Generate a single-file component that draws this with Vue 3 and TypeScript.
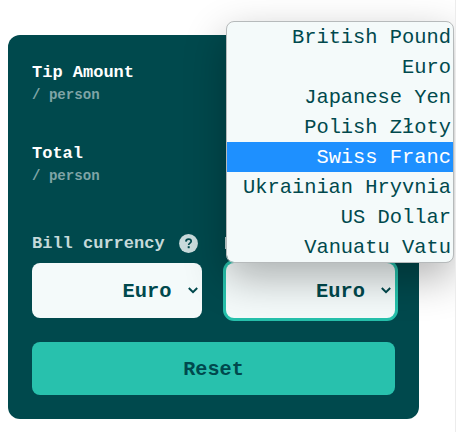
<script setup lang="ts">
import { ref } from 'vue'

interface Amount {
  title: string
  unit: string
}

const amounts: Amount[] = [
  { title: 'Tip Amount', unit: '/ person' },
  { title: 'Total', unit: '/ person' },
]

const currencies: string[] = [
  'British Pound',
  'Euro',
  'Japanese Yen',
  'Polish Złoty',
  'Swiss Franc',
  'Ukrainian Hryvnia',
  'US Dollar',
  'Vanuatu Vatu',
]

const billCurrency = ref('Euro')
const payCurrency = ref('Euro')
const highlighted = ref('Swiss Franc')
</script>

<template>
  <main class="page">
    <section class="card">
      <div class="amounts">
        <div v-for="a in amounts" :key="a.title" class="amount">
          <div class="title">{{ a.title }}</div>
          <div class="unit">{{ a.unit }}</div>
        </div>
      </div>

      <div class="fields">
        <div class="field">
          <div class="label">
            <span>Bill currency</span>
            <svg class="help" viewBox="0 0 19 19">
              <circle cx="9.5" cy="9.5" r="9.4" fill="#c9dbdc" />
              <path d="M6.9 7.6C7 5.9 8.1 5.1 9.6 5.1c1.6 0 2.6.9 2.6 2.2 0 1.9-2.5 1.8-2.5 3.7" fill="none" stroke="#00494d" stroke-width="1.7" />
              <rect x="8.7" y="12.2" width="2" height="2" fill="#00494d" />
            </svg>
          </div>
          <button class="select" type="button">
            <span>{{ billCurrency }}</span>
            <svg class="chevron" viewBox="0 0 10 7"><path d="M0.8 1 5 5.2 9.2 1" /></svg>
          </button>
        </div>
        <div class="field">
          <div class="label"><i class="stem"></i></div>
          <button class="select focused" type="button">
            <span>{{ payCurrency }}</span>
            <svg class="chevron" viewBox="0 0 10 7"><path d="M0.8 1 5 5.2 9.2 1" /></svg>
          </button>
        </div>
      </div>

      <button class="reset" type="button">Reset</button>
    </section>

    <ul class="menu">
      <li
        v-for="c in currencies"
        :key="c"
        :class="{ active: c === highlighted }"
        @mouseenter="highlighted = c"
      >{{ c }}</li>
    </ul>
  </main>
</template>

<style>
body {
  margin: 0;
  background: #fff;
}
</style>

<style scoped>
.page {
  position: relative;
  box-sizing: border-box;
  width: 456px;
  height: 432px;
  padding: 35px 0 0 8px;
  overflow: hidden;
  border-right: 1px solid #ececec;
  font-family: "Liberation Mono", monospace;
  font-weight: 700;
}
.card {
  box-sizing: border-box;
  width: 411px;
  height: 384px;
  padding: 24px;
  border-radius: 12px;
  background: #00494d;
}
.amounts {
  height: 175px;
}
.amount {
  height: 81px;
}
.title {
  height: 25px;
  line-height: 27px;
  font-size: 17px;
  color: #fff;
}
.unit {
  height: 20px;
  line-height: 22px;
  font-size: 14.1px;
  color: #7fa4a6;
}
.fields {
  display: grid;
  grid-template-columns: 1fr 1fr;
  gap: 24px;
}
.label {
  display: flex;
  align-items: center;
  gap: 14px;
  height: 20px;
  margin-bottom: 9px;
  font-size: 17px;
  line-height: 20px;
  color: #c5d9da;
  white-space: nowrap;
}
.help {
  width: 19px;
  height: 19px;
  margin-bottom: 2px;
}
.stem {
  width: 3px;
  height: 12px;
  margin: 0 0 2px -1px;
  background: #c5d9da;
}
.select {
  display: flex;
  align-items: center;
  justify-content: flex-end;
  gap: 16px;
  box-sizing: border-box;
  width: 100%;
  height: 55px;
  padding: 2px 4px 0 0;
  border: 0;
  border-radius: 8px;
  background: #f4fafa;
  color: #00494d;
  font: inherit;
  font-size: 20.4px;
}
.focused {
  box-shadow: 0 0 0 3px #26c0ab;
}
.chevron {
  width: 10px;
  height: 7px;
  margin-bottom: 3px;
}
.chevron path {
  fill: none;
  stroke: #00494d;
  stroke-width: 2;
}
.reset {
  display: block;
  width: 100%;
  height: 53px;
  margin-top: 24px;
  padding: 2px 0 0;
  border: 0;
  border-radius: 8px;
  background: #28c1ad;
  color: #00494d;
  font: inherit;
  font-size: 20.2px;
}
.menu {
  position: absolute;
  top: 21px;
  left: 226px;
  box-sizing: border-box;
  width: 228px;
  margin: 0;
  padding: 0;
  overflow: hidden;
  list-style: none;
  border: 1px solid #b6babb;
  border-radius: 8px;
  background: #f4fafa;
  background-clip: padding-box;
  box-shadow: 0 15px 42px rgba(0, 0, 0, 0.3);
  color: #00494d;
  font-size: 20.4px;
  font-weight: 400;
  text-align: right;
}
.menu li {
  height: 30px;
  padding-right: 2px;
  line-height: 32px;
}
.menu .active {
  background: #1e90ff;
  color: #fff;
}
</style>
